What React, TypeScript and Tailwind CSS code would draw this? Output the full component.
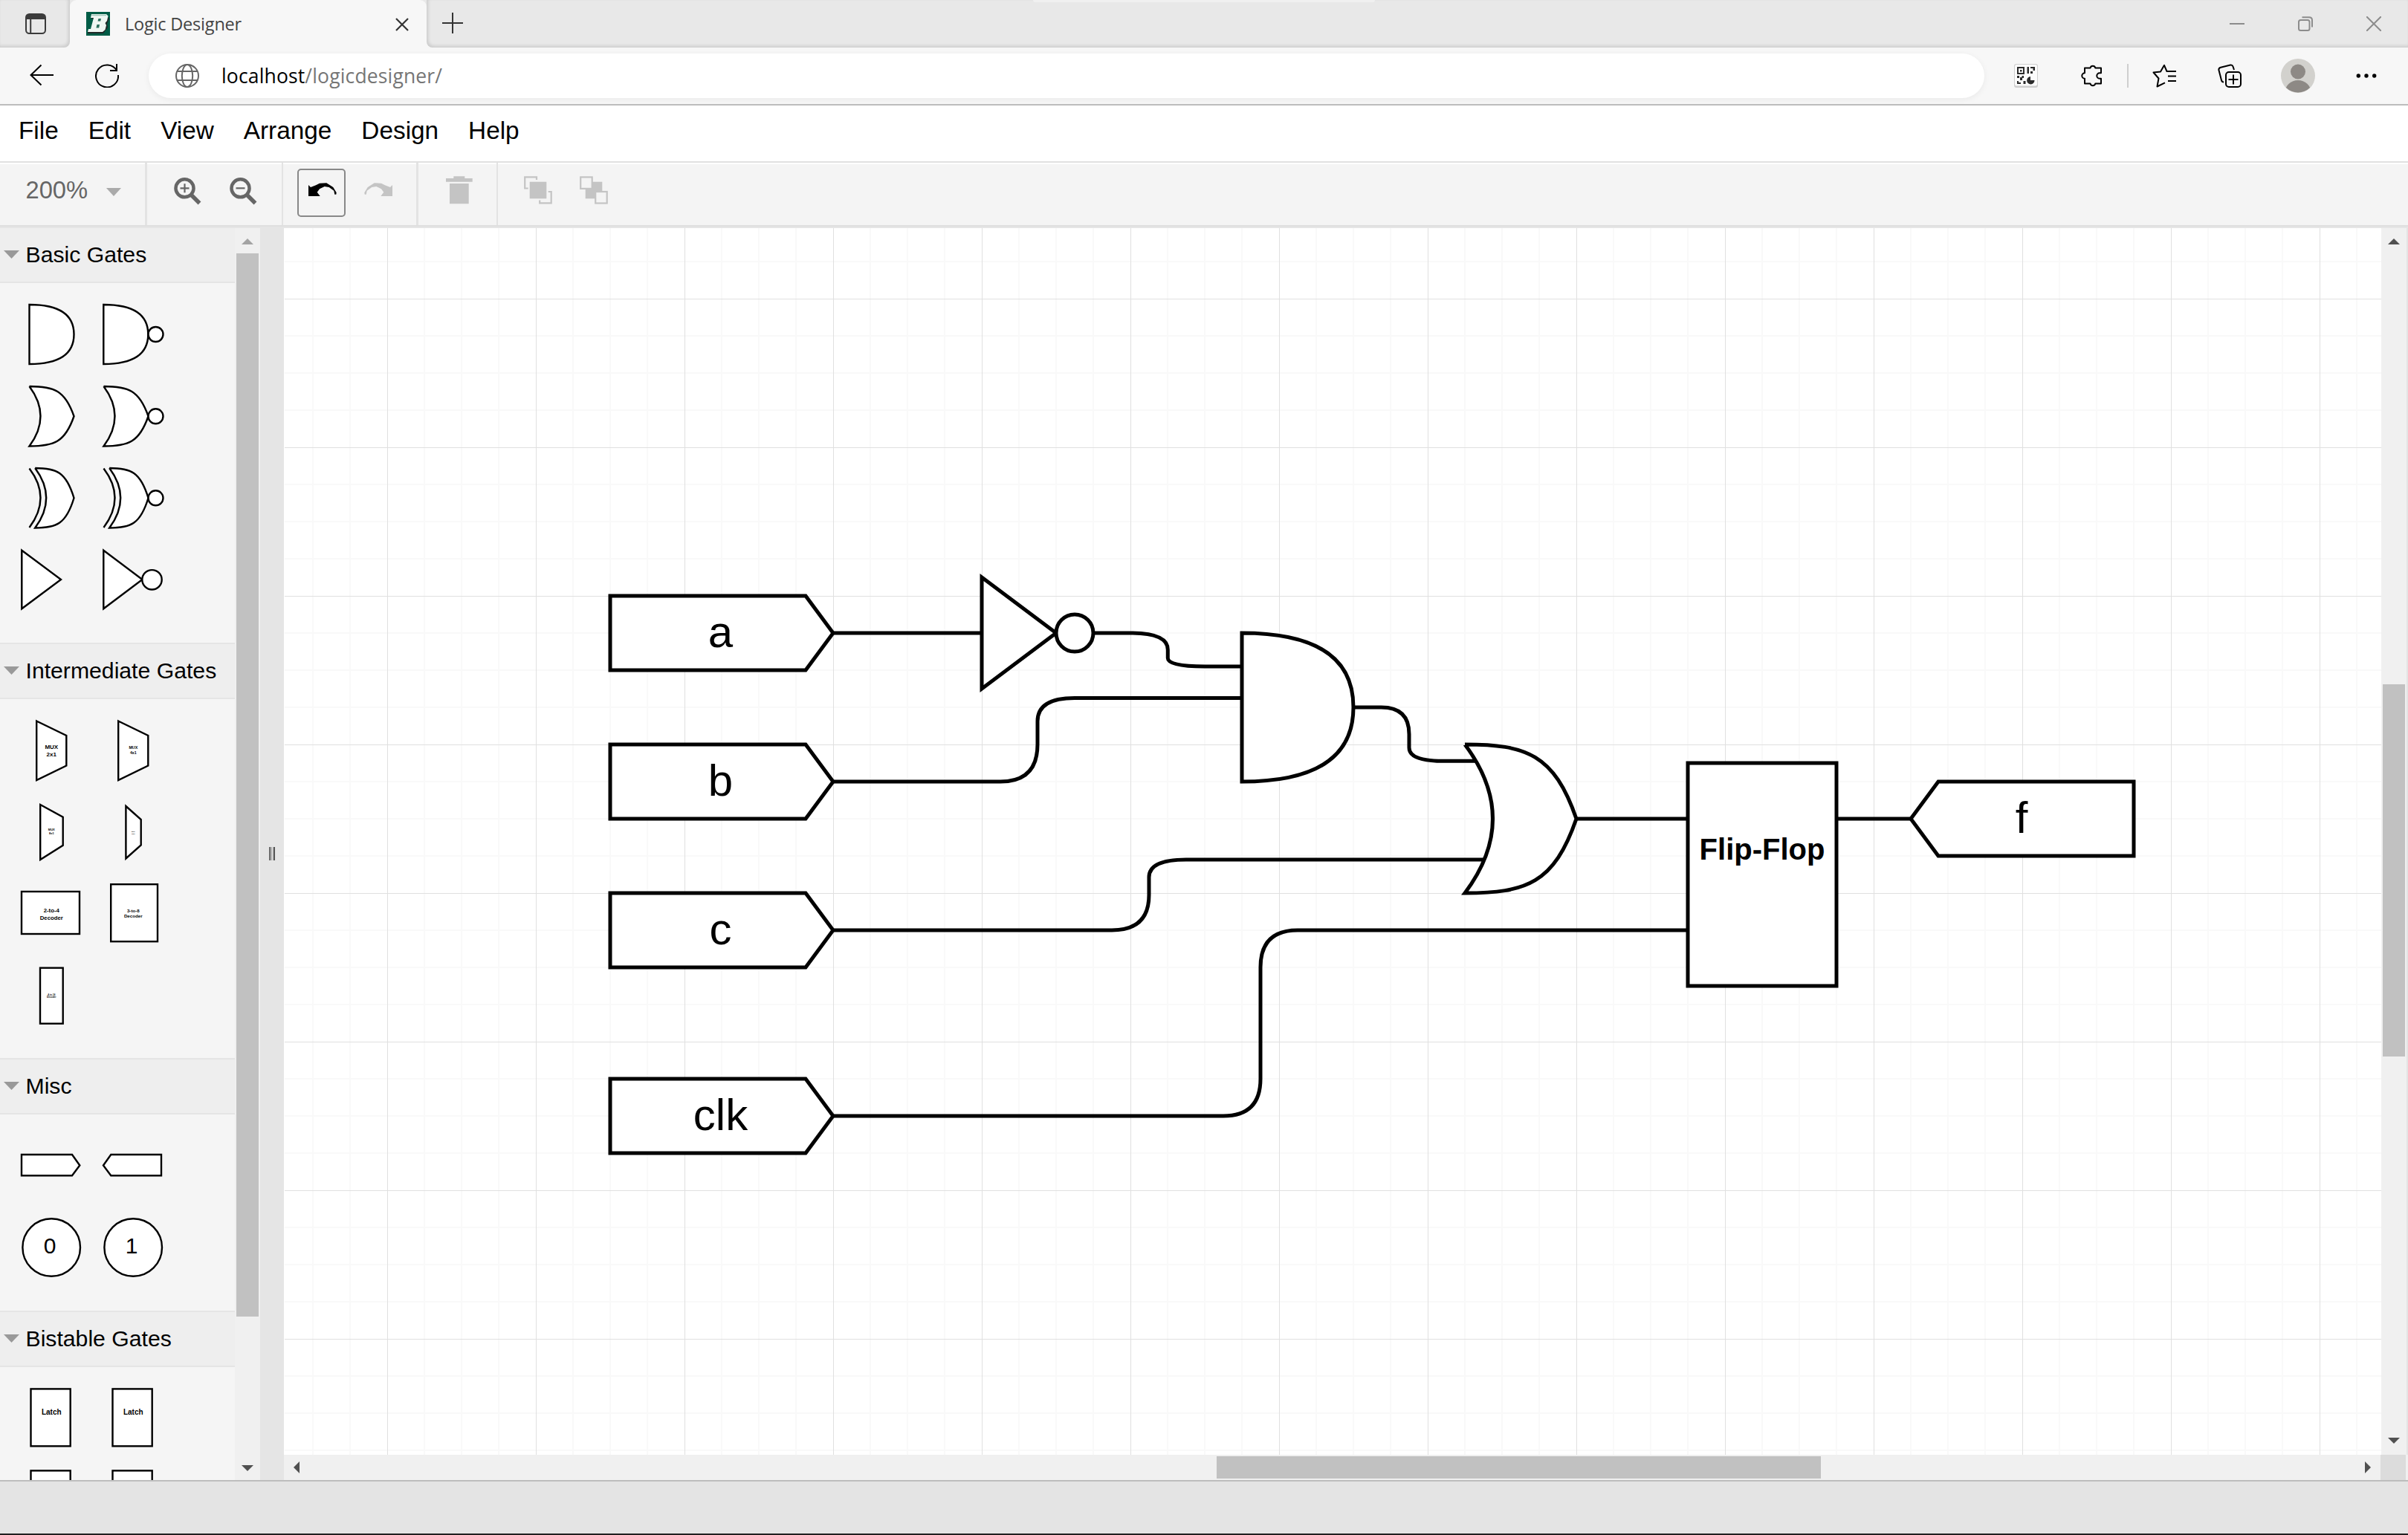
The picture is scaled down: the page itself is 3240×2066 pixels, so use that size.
import React from "react";

type Point = [number, number];

/** Orthogonal wire with quadratic rounded corners, at most `size` long on each side. */
function wirePath(points: Point[], size = 50): string {
  let [px, py] = points[0];
  let d = `M${px} ${py}`;
  for (let i = 1; i < points.length - 1; i++) {
    const [cx, cy] = points[i];
    const [nx, ny] = points[i + 1];
    const before = Math.hypot(px - cx, py - cy);
    const a = Math.min(size, before / 2) / before;
    d += ` L${cx + (px - cx) * a} ${cy + (py - cy) * a}`;
    const after = Math.hypot(nx - cx, ny - cy);
    const b = Math.min(size, after / 2) / after;
    px = cx + (nx - cx) * b;
    py = cy + (ny - cy) * b;
    d += ` Q${cx} ${cy} ${px} ${py}`;
  }
  const [lx, ly] = points[points.length - 1];
  return `${d} L${lx} ${ly}`;
}

function andPath(x: number, y: number, w: number, h: number): string {
  return `M${x} ${y} Q${x + w} ${y} ${x + w} ${y + h / 2} Q${x + w} ${y + h} ${x} ${y + h} Z`;
}

function orPath(x: number, y: number, w: number, h: number, back = w / 2): string {
  return (
    `M${x} ${y} C${x + w * 0.55} ${y} ${x + w * 0.8} ${y + h * 0.065} ${x + w} ${y + h / 2} ` +
    `C${x + w * 0.8} ${y + h * 0.935} ${x + w * 0.55} ${y + h} ${x} ${y + h} ` +
    `Q${x + back} ${y + h / 2} ${x} ${y}`
  );
}

/* ---------- Browser chrome ---------- */

function TabStrip() {
  return (
    <div className="flex h-16 shrink-0 bg-[#f7f7f7]">
      <div className="flex w-[94px] items-center rounded-br-lg bg-[#e8e8e8] pl-[34px] shadow-[inset_-2px_-2px_4px_rgba(0,0,0,0.13)]">
        <svg width="28" height="28" viewBox="0 0 28 28" fill="none" stroke="#3b3b3b" strokeWidth="2">
          <rect x="1" y="1" width="26" height="26" rx="4.5" />
          <path d="M1 8V5.500Q1 1 5.500 1H22.500Q27 1 27 5.500V8Z" fill="#3b3b3b" stroke="none" />
          <path d="M1 7H27M7.200 8V27" />
        </svg>
      </div>
      <div className="w-[480px] bg-[linear-gradient(#e8e8e8_50%,#f7f7f7_50%)]">
        <div className="flex h-16 items-center rounded-t-[9px] bg-[#f7f7f7] pl-[22px]">
          <svg width="32" height="32" viewBox="0 0 32 32">
            <rect width="32" height="32" fill="#005c46" />
            <path d="M8 5H27L31 9L28 16L29 21L23 29H2V25L8 22L11 10L7 9Z" fill="#202a28" />
            <path
              d="M7 3H27L29.500 5.500L28 12L25.500 15L27 18L25.500 24L22 27H2L3 23H6L10 8H6Z"
              fill="#eef6f2"
            />
            <path d="M16.500 9H20L19.200 12.500H15.500ZM14.500 17H18L17.200 21.500H13.400Z" fill="#2b6f5d" />
            <path d="M7.500 4.500H27" stroke="#9fc4b8" strokeWidth="1.500" />
          </svg>
          <span className="ml-5 w-[364px] font-['Open_Sans','Noto_Sans',sans-serif] text-[23.5px] leading-8 tracking-[-0.2px] text-[#444]">
            Logic Designer
          </span>
          <svg width="18" height="18" viewBox="0 0 18 18" stroke="#333" strokeWidth="2.200" className="mt-0.5">
            <path d="M1 1L17 17M17 1L1 17" />
          </svg>
        </div>
      </div>
      <div className="flex flex-1 items-center rounded-bl-lg bg-[#e8e8e8] shadow-[inset_2px_-2px_4px_rgba(0,0,0,0.13)]">
        <svg width="28" height="28" viewBox="0 0 28 28" stroke="#333" strokeWidth="2" className="-mt-0.5 ml-[21px]">
          <path d="M14 0V28M0 14H28" />
        </svg>
        <div className="ml-[767px] h-[3px] w-[460px] self-start rounded-b bg-[#f0f0f0]" />
        <div className="ml-auto mr-9 flex items-center gap-[72px]">
          <svg width="20" height="20" viewBox="0 0 20 20" stroke="#8c8c8c" strokeWidth="2">
            <path d="M0 10H20" />
          </svg>
          <svg width="20" height="20" viewBox="0 0 20 20" fill="none" stroke="#8c8c8c" strokeWidth="2">
            <rect x="1" y="5" width="14.500" height="14" rx="2.500" />
            <path d="M5.500 1.200H15Q19 1.200 19 5.200V14.500" />
          </svg>
          <svg width="20" height="20" viewBox="0 0 20 20" stroke="#8c8c8c" strokeWidth="2">
            <path d="M0 0L20 20M20 0L0 20" />
          </svg>
        </div>
      </div>
    </div>
  );
}

function AddressBar() {
  return (
    <div className="flex h-[78px] shrink-0 items-center border-b-2 border-[#bdbdbd] bg-[#f7f7f7]">
      <svg width="32" height="32" viewBox="0 0 32 32" fill="none" stroke="#000" strokeWidth="2" className="ml-10">
        <path d="M1 15H32M15.500 1.500L1.500 15L15.500 28.500" />
      </svg>
      <svg width="32" height="32" viewBox="0 0 32 32" fill="none" stroke="#000" strokeWidth="2" className="ml-14">
        <path d="M31 15A15 15 0 1 1 29 8.800M29 0V9H20" />
      </svg>
      <div className="ml-10 flex h-[60px] w-[2470px] items-center rounded-full bg-white pl-9 shadow-[0_2px_8px_rgba(0,0,0,0.06)]">
        <svg width="32" height="32" viewBox="0 0 32 32" fill="none" stroke="#666" strokeWidth="2">
          <circle cx="16" cy="16" r="15" />
          <ellipse cx="16" cy="16" rx="7.200" ry="15" />
          <path d="M2 10H30M2 22H30" />
        </svg>
        <span className="ml-[30px] font-['Open_Sans','Noto_Sans',sans-serif] text-[26.5px] leading-9 tracking-[0.15px] text-[#767676]">
          <span className="text-black">localhost</span>/logicdesigner/
        </span>
      </div>
      <svg width="32" height="32" viewBox="0 0 32 32" className="ml-10">
        <rect width="32" height="32" rx="3" fill="#cfcfcf" />
        <rect x="1" y="1" width="30" height="28.500" rx="2.500" fill="#fcfcfc" />
        <g fill="#2b2b2b">
          <path d="M4 4H14V14H4ZM6 6V12H12V6ZM8 8H10.500V10.500H8Z" fillRule="evenodd" />
          <path d="M17.500 4H20V13H17.500ZM22 4H28V9H25.500V6H22ZM22 10H25V13H22Z" />
          <path d="M4 16H7V19H4ZM8 18H11V22H8ZM10.500 16H13V19H10.500ZM4 23H6V25H9V27H4ZM12.500 23H15.500V27H12.500Z" />
          <path d="M22 17V22H27.500A5.200 5.200 0 1 1 22 17Z" />
        </g>
      </svg>
      <svg width="30" height="32" viewBox="0 0 30 32" fill="none" stroke="#000" strokeWidth="2" className="ml-[58px]">
        <path
          d="M5 5.500H12.500A3.500 3.500 0 0 1 19.300 5.500H27V12.300H25A3.700 3.700 0 0 0 25 19.700H27V26.500H19.300A3.500 3.500 0 0 1 12.500 26.500H5V19.700A3.700 3.700 0 0 1 5 12.300Z"
          strokeLinejoin="round"
        />
      </svg>
      <div className="ml-8 h-8 w-0.5 bg-[#cfcfcf]" />
      <svg width="32" height="32" viewBox="0 0 32 32" fill="none" stroke="#000" strokeWidth="2" strokeLinejoin="round" className="ml-8">
        <path d="M22 10H19.500L16 1.800L11 10.500L1.500 11.500L8.500 19.500L6.500 30.500L17 25.300" />
        <path d="M21 10H32M21 16.500H32M21 23H32" />
      </svg>
      <svg width="32" height="32" viewBox="0 0 32 32" fill="none" stroke="#000" strokeWidth="2" className="ml-14">
        <path d="M22 8L20.500 3.500Q19.700 1 17 1.500L4 4.700Q0.800 5.600 1.500 8.500L5 22Q5.700 24.500 8 24.500" />
        <rect x="11" y="11" width="20" height="20" rx="4" />
        <path d="M21 14.500V27.500M14.500 21H27.500" />
      </svg>
      <svg width="46" height="46" viewBox="0 0 46 46" className="ml-[53px]">
        <clipPath id="avatar">
          <circle cx="23" cy="23" r="22.500" />
        </clipPath>
        <circle cx="23" cy="23" r="23" fill="#d2d1cd" />
        <g clipPath="url(#avatar)" fill="#8d8985">
          <circle cx="23" cy="17.500" r="10" />
          <ellipse cx="23" cy="45" rx="17.500" ry="16" />
        </g>
      </svg>
      <svg width="28" height="6" viewBox="0 0 28 6" className="ml-[55px]">
        <circle cx="3.300" cy="3" r="2.700" />
        <circle cx="14" cy="3" r="2.700" />
        <circle cx="24.700" cy="3" r="2.700" />
      </svg>
    </div>
  );
}

/* ---------- Application bars ---------- */

const menus = ["File", "Edit", "View", "Arrange", "Design", "Help"];

function MenuBar() {
  return (
    <div className="flex h-[77px] shrink-0 gap-10 border-b-2 border-[#e0e0e0] bg-white pl-[25px] pt-[9px] text-[33.33px] leading-[50px] text-black">
      {menus.map((m) => (
        <span key={m}>{m}</span>
      ))}
    </div>
  );
}

function Magnifier({ plus }: { plus?: boolean }) {
  return (
    <svg width="38" height="38" viewBox="0 0 38 38" fill="none" stroke="#666">
      <circle cx="14.500" cy="14.300" r="12" strokeWidth="4.500" />
      <path d={plus ? "M8.500 14.300H20.500M14.500 8.300V20.300" : "M8.500 14.300H20.500"} strokeWidth="2.200" />
      <path d="M23 23L34.500 34.500" strokeWidth="5.500" />
    </svg>
  );
}

const undoShape =
  "M0 3L3 6L10 3.300L15 .7L24.300 .3L33.300 6L37.700 13.300L37.300 15.700H35.300L34.300 10.700L27.700 6L21.700 5L15 8.300L11.700 12.700L15.700 18H0Z";

function Toolbar() {
  return (
    <div className="flex h-[88px] shrink-0 flex-col border-b-2 border-[#e5e5e5] bg-[#f4f4f4]">
      <div className="flex h-[84px] border-t-2 border-white">
        <div className="flex w-[195px] items-center pl-[34.5px]">
          <span className="-mt-3 text-[32.7px] leading-[40px] text-[#666]">200%</span>
          <svg width="20" height="11" viewBox="0 0 20 11" className="ml-[25px] mt-[-7px]">
            <path d="M0 0H20L10 11Z" fill="#aaa" />
          </svg>
        </div>
        <div className="-mt-0.5 flex w-[183.500px] border-l-[3px] border-[#e3e3e3] pl-[36px] pt-[20px]">
          <div className="flex gap-[37px]">
            <Magnifier plus />
            <Magnifier />
          </div>
        </div>
        <div className="-mt-0.5 flex w-[181.500px] border-l-2 border-[#e3e3e3] pl-[19.500px] pt-[8px]">
          <div className="flex h-[65px] w-[65px] rounded-[5px] border-2 border-[#888] pl-[13px] pt-[17px]">
            <svg width="38" height="19" viewBox="0 0 38 19">
              <path d={undoShape} fill="#000" />
            </svg>
          </div>
          <svg width="38" height="19" viewBox="0 0 38 19" className="ml-[25px] mt-[19px]">
            <path d={undoShape} fill="#c4c4c4" transform="matrix(-1 0 0 1 38 0)" />
          </svg>
        </div>
        <div className="-mt-0.5 flex w-[108px] border-l-[3px] border-[#e3e3e3] pl-[37px] pt-[18px]">
          <svg width="36" height="38" viewBox="0 0 36 38" fill="#c4c4c4">
            <path d="M0 3H10.300V0.300H25.300V3H35.700V7.700H0ZM5 10H30.700V37.300H5Z" />
          </svg>
        </div>
        <div className="-mt-0.5 flex flex-1 gap-[37px] border-l-2 border-[#e3e3e3] pl-[35px] pt-[18px]">
          <svg width="38" height="38" viewBox="0 0 38 38" fill="none" stroke="#c4c4c4" strokeWidth="2.200">
            <rect x="7.700" y="7.700" width="22.600" height="22.600" fill="#c4c4c4" stroke="none" />
            <path d="M5.700 16.500H1.200V1.400H17V5M32.700 21H36.700V36.300H21.200V32.500" />
          </svg>
          <svg width="38" height="38" viewBox="0 0 38 38" fill="none" stroke="#c4c4c4" strokeWidth="2.200">
            <rect x="7.700" y="7.700" width="22.600" height="22.600" fill="#c4c4c4" stroke="none" />
            <rect x="1.200" y="1.400" width="15.500" height="15.500" fill="#f4f4f4" />
            <rect x="21.200" y="21" width="15.500" height="15.500" fill="#f4f4f4" />
          </svg>
        </div>
      </div>
      <div className="h-0.5 bg-[#dfdfdf]" />
    </div>
  );
}

/* ---------- Sidebar palette ---------- */

function Cell({ children }: { children?: React.ReactNode }) {
  return (
    <svg width="110" height="110" viewBox="0 0 110 110" fill="#fff" stroke="#000" strokeWidth="2.400" className="overflow-visible">
      {children}
    </svg>
  );
}

function TinyLabel({ lines, size, ys, x = 55.3 }: { lines: string[]; size: number; ys: number[]; x?: number }) {
  return (
    <g fill="#000" stroke="none" fontWeight="700" textAnchor="middle" fontSize={size}>
      {lines.map((t, i) => (
        <text key={t} x={x} y={ys[i]}>
          {t}
        </text>
      ))}
    </g>
  );
}

function Section({ title, first, height, children }: { title: string; first?: boolean; height: string; children: React.ReactNode }) {
  return (
    <section className="shrink-0">
      <div
        className={
          first
            ? "flex h-[74px] items-start border-b-2 border-[#e5e5e5] bg-[#eee]"
            : "flex h-[76px] items-start border-y-2 border-[#e5e5e5] bg-[#eee]"
        }
      >
        <svg width="21" height="11" viewBox="0 0 21 11" className="ml-[5px] mt-[30px]">
          <path d="M0 0H21L10.500 11Z" fill="#999" />
        </svg>
        <span className="ml-[8.5px] text-[30.2px] leading-[72px] text-black">{title}</span>
      </div>
      <div className={height}>
        <div className="grid w-[220px] grid-cols-2">{children}</div>
      </div>
    </section>
  );
}

function Sidebar() {
  return (
    <div className="flex w-[316px] shrink-0 flex-col overflow-hidden bg-[#f5f5f5]">
      <Section title="Basic Gates" first height="h-[484px] pl-[14px] pt-[14px]">
        <Cell>
          <path d={andPath(25.5, 15, 60, 80)} />
        </Cell>
        <Cell>
          <path d={andPath(15.3, 15, 60, 80)} />
          <circle cx="85.500" cy="55" r="10" />
        </Cell>
        <Cell>
          <path d={orPath(25.5, 15, 60, 80.5, 30)} />
        </Cell>
        <Cell>
          <path d={orPath(15.5, 15, 60, 80.5, 30)} />
          <circle cx="85.500" cy="55.300" r="10" />
        </Cell>
        <Cell>
          <path d="M25.500 15.500Q55.500 55 25.500 95" fill="none" />
          <path d={orPath(33.2, 15, 52.3, 80.5, 30)} />
        </Cell>
        <Cell>
          <path d="M15.500 15.500Q45.500 55 15.500 95" fill="none" />
          <path d={orPath(23.2, 15, 52.3, 80.5, 30)} />
          <circle cx="85.500" cy="55.300" r="10" />
        </Cell>
        <Cell>
          <path d="M15.300 15.700L68 55L15.300 94.300Z" />
        </Cell>
        <Cell>
          <path d="M15.300 15.700L67.500 55L15.300 94.300Z" />
          <circle cx="80.500" cy="55.300" r="13.200" />
        </Cell>
      </Section>

      <Section title="Intermediate Gates" height="h-[483px] pl-[14px] pt-[14px]">
        <Cell>
          <path d="M35.200 15.500L75.300 35V75.500L35.200 95Z" />
          <TinyLabel lines={["MUX", "2x1"]} size={8} ys={[53, 62.7]} />
        </Cell>
        <Cell>
          <path d="M35.200 15.500L75.300 35V75.500L35.200 95Z" />
          <TinyLabel lines={["MUX", "4x1"]} size={5.3} ys={[53, 60]} />
        </Cell>
        <Cell>
          <path d="M40.200 18L70.700 34.800V72.800L40.200 92Z" />
          <TinyLabel lines={["MUX", "8x1"]} size={4} ys={[53, 58]} />
        </Cell>
        <Cell>
          <path d="M45.400 20L65.700 38V72.500L45.400 90.500Z" />
          <TinyLabel lines={["MUX", "16x1"]} size={2} ys={[55, 57.5]} />
        </Cell>
        <Cell>
          <rect x="15" y="25" width="78" height="57" />
          <TinyLabel lines={["2-to-4", "Decoder"]} size={7.8} ys={[53, 62.7]} />
        </Cell>
        <Cell>
          <rect x="25.200" y="15.200" width="62.800" height="77" />
          <TinyLabel lines={["3-to-8", "Decoder"]} size={6.2} ys={[53, 60]} />
        </Cell>
        <Cell>
          <rect x="40" y="17.700" width="30.700" height="75" />
          <TinyLabel lines={["4-to-16", "Decoder"]} size={3.1} ys={[55, 58]} />
        </Cell>
      </Section>

      <Section title="Misc" height="h-[264px] pl-[14px] pt-[14px]">
        <Cell>
          <path d="M15 40H83L93.300 54.500L83 68.300H15Z" />
        </Cell>
        <Cell>
          <path d="M93 40H25.300L15 54.500L25.300 68.300H93Z" />
        </Cell>
        <Cell>
          <circle cx="55.200" cy="55" r="38.800" />
          <text x="53" y="63" fontSize="30" fill="#000" stroke="none" textAnchor="middle">
            0
          </text>
        </Cell>
        <Cell>
          <circle cx="55.200" cy="55" r="38.800" />
          <text x="53" y="63" fontSize="30" fill="#000" stroke="none" textAnchor="middle">
            1
          </text>
        </Cell>
      </Section>

      <Section title="Bistable Gates" height="h-[264px] pl-[14px] pt-[14px]">
        {["Latch", "Latch", "", ""].map((label, i) => (
          <Cell key={i}>
            <rect x="27.500" y="15.400" width="53.200" height="77" />
            {label && <TinyLabel lines={[label]} size={10} ys={[50]} />}
          </Cell>
        ))}
      </Section>
    </div>
  );
}

function VArrow({ down, fill }: { down?: boolean; fill: string }) {
  return (
    <svg width="16" height="8" viewBox="0 0 16 8" className="shrink-0">
      <path d={down ? "M0 0H16L8 8Z" : "M0 8H16L8 0Z"} fill={fill} />
    </svg>
  );
}

function SidebarScrollbar() {
  return (
    <div className="flex w-[34px] shrink-0 flex-col items-center bg-[#f0f0f0] pb-3 pt-[14px]">
      <VArrow fill="#a3a3a3" />
      <div className="mt-3 h-[1431px] w-[30px] bg-[#c1c1c1]" />
      <div className="flex-1" />
      <VArrow down fill="#505050" />
    </div>
  );
}

function Splitter() {
  return (
    <div className="flex w-8 shrink-0 justify-center bg-[#e5e5e5] pt-[833px]">
      <div className="flex h-[18px] gap-[1px]">
        <div className="w-1 bg-linear-to-r from-[#555] to-[#ccc]" />
        <div className="w-[3px] bg-linear-to-r from-[#bbb] to-[#333]" />
      </div>
    </div>
  );
}

/* ---------- Drawing canvas ---------- */

const range = (from: number, to: number, step: number) =>
  Array.from({ length: Math.floor((to - from) / step) + 1 }, (_, i) => from + i * step);

const minorX = range(421, 3204, 50).filter((x) => (x - 521) % 200 !== 0);
const minorY = range(352, 1958, 50).filter((y) => (y - 402) % 200 !== 0);

const inputs = [
  { label: "a", y: 802 },
  { label: "b", y: 1002 },
  { label: "c", y: 1202 },
  { label: "clk", y: 1452 },
];

const wires: Point[][] = [
  [[1121, 852], [1321, 852]],
  [[1471, 852], [1571.3, 852], [1571.3, 897], [1671, 897]],
  [[1121, 1052], [1396, 1052], [1396, 939.4], [1671, 939.4]],
  [[1821, 952], [1896, 952], [1896, 1024.3], [1987, 1024.3]],
  [[1121, 1252], [1546, 1252], [1546, 1157], [1997, 1157]],
  [[1121, 1502], [1696, 1502], [1696, 1252], [2271, 1252]],
  [[2121, 1102], [2271, 1102]],
  [[2471, 1102], [2571, 1102]],
];

function Diagram() {
  return (
    <svg width="2822" height="1651" viewBox="382 307 2822 1651" className="block">
      <rect x="382" y="307" width="2822" height="1651" fill="#fff" />
      <g fill="#f9f9f9">
        {minorX.map((x) => (
          <rect key={x} x={x - 1} y="307" width="2" height="1651" />
        ))}
        {minorY.map((y) => (
          <rect key={y} x="383" y={y - 1} width="2821" height="2" />
        ))}
      </g>
      <g fill="#e0e0e0">
        {range(521, 3204, 200).map((x) => (
          <rect key={x} x={x} y="307" width="1" height="1651" />
        ))}
        {range(402, 1958, 200).map((y) => (
          <rect key={y} x="383" y={y} width="2821" height="1" />
        ))}
      </g>
      <g fill="none" stroke="#000" strokeWidth="5">
        {wires.map((w, i) => (
          <path key={i} d={wirePath(w)} />
        ))}
      </g>
      <g fill="#fff" stroke="#000" strokeWidth="5">
        {inputs.map((n) => (
          <path key={n.label} d={`M821 ${n.y}H1084L1121 ${n.y + 50}L1084 ${n.y + 100}H821Z`} />
        ))}
        <path d="M1321 777L1421 852L1321 927Z" />
        <circle cx="1446" cy="852" r="25" />
        <path d={andPath(1671, 852, 150, 200)} />
        <path d={orPath(1971, 1002, 150, 200)} />
        <rect x="2271" y="1027" width="200" height="300" />
        <path d="M2871 1052H2608L2571 1102L2608 1152H2871Z" />
      </g>
      <g fontSize="60" textAnchor="middle">
        {inputs.map((n) => (
          <text key={n.label} x="969.500" y={n.y + 69}>
            {n.label}
          </text>
        ))}
        <text x="2720" y="1121">
          f
        </text>
      </g>
      <text x="2371" y="1157" fontSize="40" fontWeight="700" textAnchor="middle">
        Flip-Flop
      </text>
    </svg>
  );
}

function Canvas() {
  return (
    <div className="flex flex-1 flex-col bg-[#f0f0f0]">
      <div className="flex h-[1651px]">
        <Diagram />
        <div className="flex w-[34px] flex-col items-center pb-[15px] pt-[14px]">
          <VArrow fill="#505050" />
          <div className="mt-[592px] h-[501px] w-[30px] bg-[#c1c1c1]" />
          <div className="flex-1" />
          <VArrow down fill="#505050" />
        </div>
        <div className="w-0.5 bg-[#e4e4e4]" />
      </div>
      <div className="flex h-[34px] items-center">
        <svg width="8" height="16" viewBox="0 0 8 16" className="ml-[13px]">
          <path d="M8 0V16L0 8Z" fill="#505050" />
        </svg>
        <div className="ml-[1234px] h-[30px] w-[813px] bg-[#c1c1c1]" />
        <svg width="8" height="16" viewBox="0 0 8 16" className="ml-auto mr-[13px]">
          <path d="M0 0V16L8 8Z" fill="#505050" />
        </svg>
        <div className="h-[34px] w-[34px] bg-[#dcdcdc]" />
        <div className="h-[34px] w-[3px] bg-[#f0f0f0]" />
      </div>
    </div>
  );
}

export default function App() {
  return (
    <div className="flex h-[2066px] w-[3240px] flex-col overflow-hidden bg-white font-['Liberation_Sans',Arial,sans-serif]">
      <TabStrip />
      <AddressBar />
      <MenuBar />
      <Toolbar />
      <div className="flex h-[1685px] shrink-0">
        <Sidebar />
        <SidebarScrollbar />
        <Splitter />
        <Canvas />
      </div>
      <div className="h-[74px] shrink-0 border-b-2 border-t-2 border-b-[#202020] border-t-[#bdbdbd] bg-[#e4e4e4]" />
    </div>
  );
}
